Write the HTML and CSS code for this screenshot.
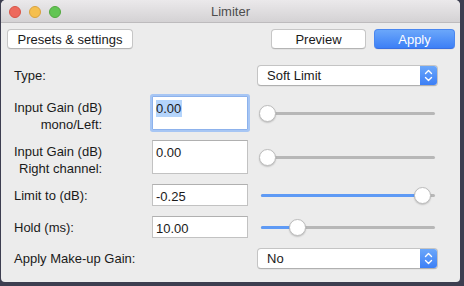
FILE: index.html
```html
<!DOCTYPE html>
<html>
<head>
<meta charset="utf-8">
<link rel="stylesheet" href="styles.css">
</head>
<body>
<div class="window">
  <div class="titlebar">
    <div class="lights">
      <span class="light red"></span>
      <span class="light yellow"></span>
      <span class="light green"></span>
    </div>
    <div class="title">Limiter</div>
    <div></div>
  </div>
  <div class="content">
    <div class="toolbar">
      <button class="btn presets">Presets &amp; settings</button>
      <div class="spacer"></div>
      <button class="btn preview">Preview</button>
      <button class="btn primary apply">Apply</button>
    </div>
    <div class="form">
      <div class="label">Type:</div>
      <div class="select span2">
        <span class="select-text">Soft Limit</span>
        <span class="stepper"><svg width="17" height="21" viewBox="0 0 17 21"><path d="M5.5 8.5 L8.5 5.5 L11.5 8.5 M5.5 12.5 L8.5 15.5 L11.5 12.5" fill="none" stroke="#fff" stroke-width="1.4" stroke-linecap="round" stroke-linejoin="round"/></svg></span>
      </div>

      <div class="label multi"><span>Input Gain (dB)<br>mono/Left:</span></div>
      <div class="field focused"><span class="sel">0.00</span></div>
      <div class="slider"><div class="track"><div class="thumb" style="left:-2px"></div></div></div>

      <div class="label multi"><span>Input Gain (dB)<br>Right channel:</span></div>
      <div class="field">0.00</div>
      <div class="slider"><div class="track"><div class="thumb" style="left:-2px"></div></div></div>

      <div class="label">Limit to (dB):</div>
      <div class="field">-0.25</div>
      <div class="slider"><div class="track"><div class="fill" style="width:162px"></div><div class="thumb" style="left:153px"></div></div></div>

      <div class="label">Hold (ms):</div>
      <div class="field">10.00</div>
      <div class="slider"><div class="track"><div class="fill" style="width:37px"></div><div class="thumb" style="left:28px"></div></div></div>

      <div class="label">Apply Make-up Gain:</div>
      <div class="select span2">
        <span class="select-text">No</span>
        <span class="stepper"><svg width="17" height="21" viewBox="0 0 17 21"><path d="M5.5 8.5 L8.5 5.5 L11.5 8.5 M5.5 12.5 L8.5 15.5 L11.5 12.5" fill="none" stroke="#fff" stroke-width="1.4" stroke-linecap="round" stroke-linejoin="round"/></svg></span>
      </div>
    </div>
  </div>
</div>
</body>
</html>
```

FILE: styles.css
```css
html, body {
  margin: 0;
  padding: 0;
}
body {
  width: 464px;
  height: 286px;
  background: #3d3e50;
  font-family: "Liberation Sans", Arial, sans-serif;
  font-size: 13px;
  color: #1a1a1a;
  overflow: hidden;
}
.window {
  margin-left: 1px;
  width: 459px;
  height: 282px;
  background: #ececec;
  border-radius: 5px 5px 4px 4px;
  overflow: hidden;
}
.titlebar {
  height: 22px;
  border-bottom: 1px solid #bdbbbd;
  background: linear-gradient(#ebe9eb, #d4d2d4);
  display: grid;
  grid-template-columns: 1fr auto 1fr;
  align-items: center;
}
.lights {
  display: flex;
  gap: 8px;
  padding-left: 8px;
  padding-top: 1px;
}
.light {
  width: 10px;
  height: 10px;
  border-radius: 50%;
  border: 1px solid;
}
.red { background: #ed6a5e; border-color: #d85447; }
.yellow { background: #f5bf4f; border-color: #d9a23f; }
.green { background: #62c554; border-color: #52a83f; }
.title {
  color: #4d4d4d;
  font-size: 13px;
}
.content {
  padding: 6px 5px 0 6px;
}
.toolbar {
  display: flex;
  align-items: center;
  height: 20px;
}
.spacer { flex: 1; }
.btn {
  font-family: inherit;
  font-size: 13px;
  color: #1a1a1a;
  height: 20px;
  padding: 0;
  background: #fff;
  border: 1px solid #c6c6c6;
  border-bottom-color: #b4b4b4;
  border-radius: 4px;
  box-shadow: 0 0.5px 0.5px rgba(0,0,0,0.08);
}
.presets { width: 126px; }
.preview { width: 95px; margin-right: 8px; }
.apply { width: 81px; }
.btn.primary {
  color: #fff;
  background: linear-gradient(#6ba7fa, #3c7ff6);
  border-color: #4a87f0;
  border-bottom-color: #3a6fe0;
}
.form {
  margin-top: 16px;
  padding-left: 7px;
  display: grid;
  grid-template-columns: 129px 96px 181px;
  grid-template-rows: 21px 34px 34px 22px 22px 21px;
  column-gap: 9px;
  row-gap: 10px;
}
.label {
  display: flex;
  align-items: center;
  white-space: nowrap;
}
.label.multi {
  align-items: flex-start;
  padding-top: 3px;
}
.label.multi span {
  text-align: right;
  line-height: 17px;
}
.span2 { grid-column: 2 / span 2; margin-left: 105px; }
.select {
  display: flex;
  align-items: stretch;
  background: #fff;
  border: 1px solid #c4c4c4;
  border-bottom-color: #b0b0b0;
  border-radius: 4px;
  overflow: hidden;
  box-shadow: 0 0.5px 0.5px rgba(0,0,0,0.08);
}
.select-text {
  flex: 1;
  padding-left: 9px;
  line-height: 19px;
}
.stepper {
  width: 17px;
  display: flex;
  align-items: center;
  justify-content: center;
  background: linear-gradient(#6ba7fa, #3c7ff6);
}
.stepper svg { display: block; }
.field {
  background: #fff;
  border: 1px solid #c2c2c2;
  border-top-color: #b0b0b0;
  padding: 3px 3px 0 3px;
  line-height: 17px;
}
.field.focused {
  border-color: #8db2ec;
  box-shadow: 0 0 0 2px #a7c6f4;
  border-radius: 1px;
}
.sel {
  background: #b4d4fb;
  padding: 0 1px 0 0;
  display: inline-block;
}
.slider {
  display: flex;
  align-items: center;
  padding-left: 4px;
  padding-right: 3px;
}
.track {
  position: relative;
  flex: 1;
  height: 3px;
  border-radius: 2px;
  background: #b7b7b7;
}
.fill {
  position: absolute;
  left: 0;
  top: 0;
  bottom: 0;
  border-radius: 2px;
  background: #5e9af5;
}
.thumb {
  position: absolute;
  top: -7px;
  width: 15px;
  height: 15px;
  border-radius: 50%;
  background: #fff;
  border: 1px solid #bcbcbc;
  box-shadow: 0 1px 1.5px rgba(0,0,0,0.18);
}
```
